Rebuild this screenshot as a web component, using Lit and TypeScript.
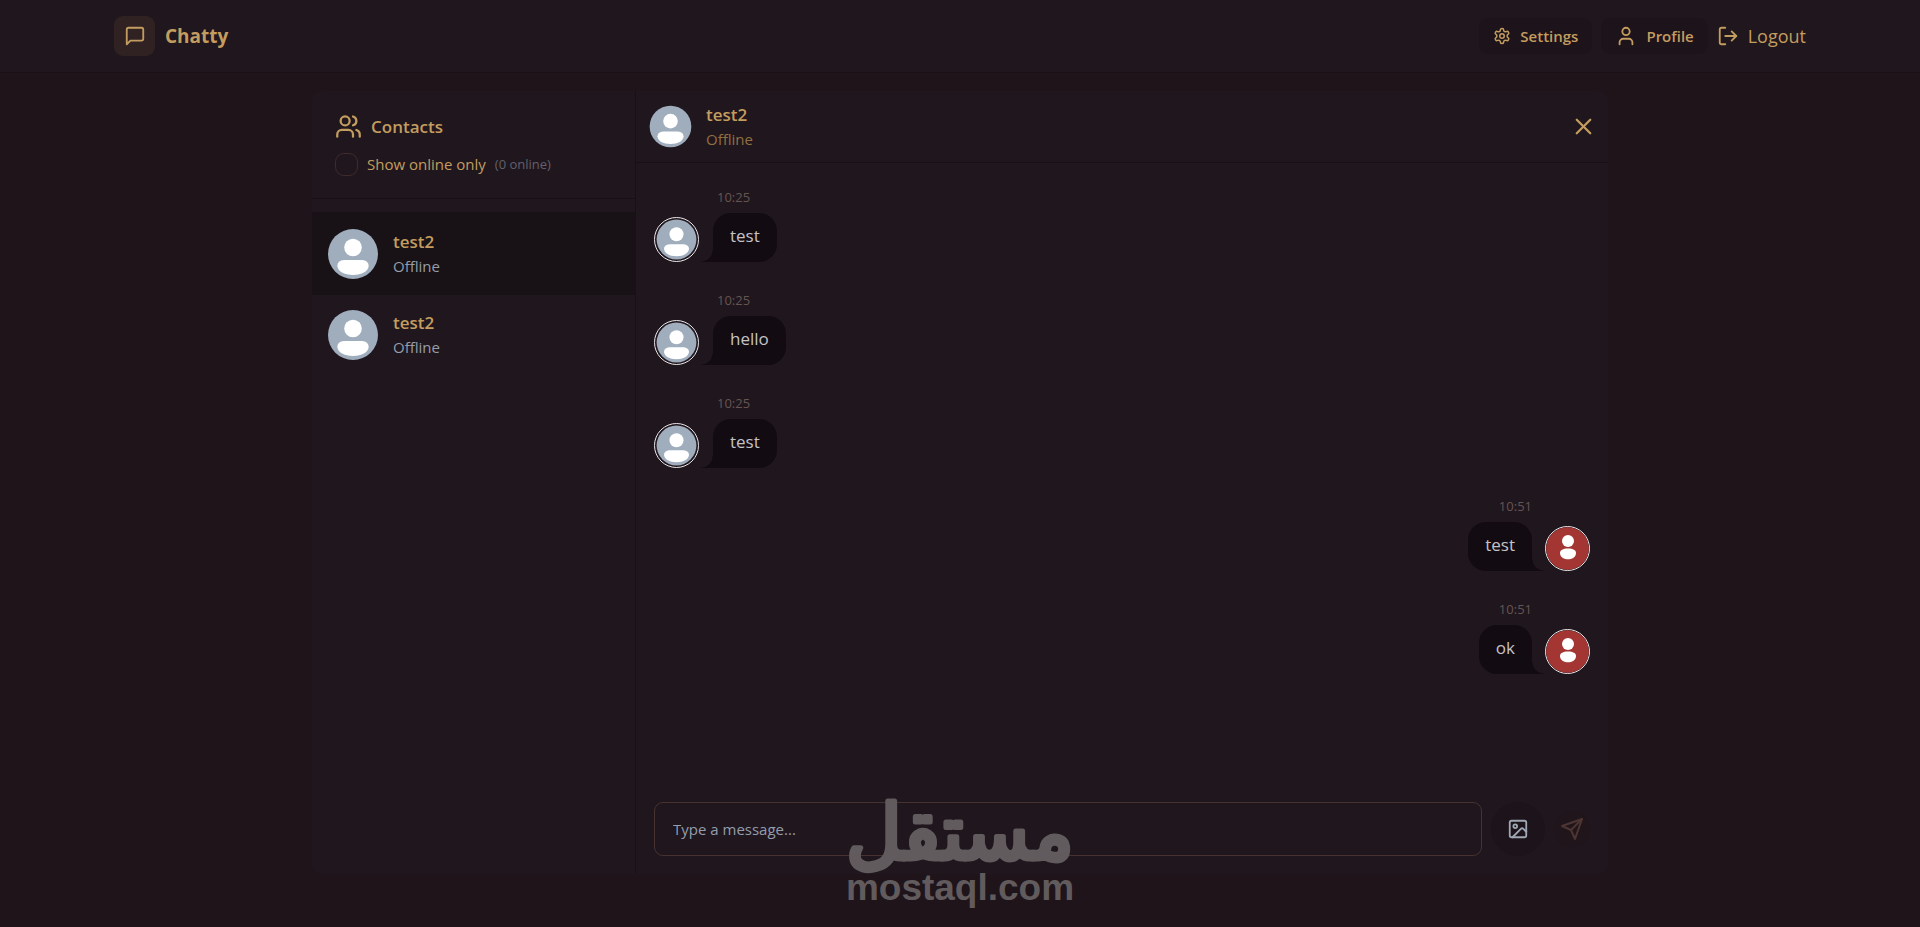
import { LitElement, html, svg, css } from "lit";
import { customElement, state } from "lit/decorators.js";

interface Contact {
  name: string;
  status: string;
}

interface Message {
  text: string;
  time: string;
  mine: boolean;
}

const contacts: Contact[] = [
  { name: "test2", status: "Offline" },
  { name: "test2", status: "Offline" },
];

const messages: Message[] = [
  { text: "test", time: "10:25", mine: false },
  { text: "hello", time: "10:25", mine: false },
  { text: "test", time: "10:25", mine: false },
  { text: "test", time: "10:51", mine: true },
  { text: "ok", time: "10:51", mine: true },
];

const icons = {
  message: svg`<path d="M21 15a2 2 0 0 1-2 2H7l-4 4V5a2 2 0 0 1 2-2h14a2 2 0 0 1 2 2z"/>`,
  settings: svg`<path d="M12.22 2h-.44a2 2 0 0 0-2 2v.18a2 2 0 0 1-1 1.73l-.43.25a2 2 0 0 1-2 0l-.15-.08a2 2 0 0 0-2.73.73l-.22.38a2 2 0 0 0 .73 2.73l.15.1a2 2 0 0 1 1 1.72v.51a2 2 0 0 1-1 1.74l-.15.09a2 2 0 0 0-.73 2.73l.22.38a2 2 0 0 0 2.73.73l.15-.08a2 2 0 0 1 2 0l.43.25a2 2 0 0 1 1 1.73V20a2 2 0 0 0 2 2h.44a2 2 0 0 0 2-2v-.18a2 2 0 0 1 1-1.73l.43-.25a2 2 0 0 1 2 0l.15.08a2 2 0 0 0 2.73-.73l.22-.39a2 2 0 0 0-.73-2.73l-.15-.08a2 2 0 0 1-1-1.74v-.5a2 2 0 0 1 1-1.74l.15-.09a2 2 0 0 0 .73-2.73l-.22-.38a2 2 0 0 0-2.73-.73l-.15.08a2 2 0 0 1-2 0l-.43-.25a2 2 0 0 1-1-1.73V4a2 2 0 0 0-2-2z"/><circle cx="12" cy="12" r="3"/>`,
  user: svg`<path d="M19 21v-2a4 4 0 0 0-4-4H9a4 4 0 0 0-4 4v2"/><circle cx="12" cy="7" r="4"/>`,
  logout: svg`<path d="M9 21H5a2 2 0 0 1-2-2V5a2 2 0 0 1 2-2h4"/><path d="m16 17 5-5-5-5"/><path d="M21 12H9"/>`,
  users: svg`<path d="M16 21v-2a4 4 0 0 0-4-4H6a4 4 0 0 0-4 4v2"/><circle cx="9" cy="7" r="4"/><path d="M22 21v-2a4 4 0 0 0-3-3.87"/><path d="M16 3.13a4 4 0 0 1 0 7.75"/>`,
  close: svg`<path d="M18 6 6 18"/><path d="m6 6 12 12"/>`,
  image: svg`<rect x="3" y="3" width="18" height="18" rx="2"/><circle cx="9" cy="9" r="2"/><path d="m21 15-3.086-3.086a2 2 0 0 0-2.828 0L6 21"/>`,
  send: svg`<path d="m22 2-7 20-4-9-9-4Z"/><path d="M22 2 11 13"/>`,
};

const icon = (name: keyof typeof icons, size: string) => html`
  <svg class="icon ${size}" viewBox="0 0 24 24" aria-hidden="true">${icons[name]}</svg>
`;

const guestAvatar = html`
  <svg class="portrait" viewBox="0 0 54 54" aria-hidden="true">
    <circle cx="27" cy="27" r="25" fill="#9fadbd" />
    <circle cx="27" cy="20.500" r="8.800" fill="#fff" />
    <path d="M18 33H36Q42.500 33.500 42.700 39C42 44.500 36 48 27 48S12 44.500 11.300 39Q11.500 33.500 18 33Z" fill="#fff" />
  </svg>
`;

const ownAvatar = html`
  <svg class="portrait" viewBox="0 0 43 43" aria-hidden="true">
    <circle cx="21.500" cy="21.500" r="21.500" fill="#a33532" />
    <circle cx="22" cy="14" r="6" fill="#fff" />
    <path d="M14 26C14 23 17 21.500 22 21.500S30 23 30 26C30 29.500 27 32.300 22 32.300S14 29.500 14 26Z" fill="#fff" />
  </svg>
`;

@customElement("app-root")
export class AppRoot extends LitElement {
  @state() private selected = 0;
  @state() private draft = "";

  static styles = css`
    :host {
      display: flex;
      flex-direction: column;
      min-height: 100vh;
      box-sizing: border-box;
      background: #1e141a;
      color: #c39d5f;
      font: 17px/27px "Open Sans", "Noto Sans", sans-serif;
    }
    * {
      box-sizing: border-box;
    }
    h1, h2, h3, p, ul, ol {
      margin: 0;
      padding: 0;
      list-style: none;
    }
    button, input {
      font: inherit;
      color: inherit;
      margin: 0;
    }
    button {
      display: flex;
      align-items: center;
      border: 0;
      padding: 0;
      background: none;
      cursor: pointer;
    }
    a {
      color: inherit;
      text-decoration: none;
    }
    .icon {
      display: block;
      flex: none;
      fill: none;
      stroke: currentColor;
      stroke-width: 2;
      stroke-linecap: round;
      stroke-linejoin: round;
    }
    .s18 { width: 18px; height: 18px; }
    .s22 { width: 22px; height: 22px; }
    .s24 { width: 24px; height: 24px; }
    .s27 { width: 27px; height: 27px; }

    .topbar {
      background: #20161d;
      border-bottom: 1px solid #190f16;
    }
    .bar {
      display: flex;
      align-items: center;
      justify-content: space-between;
      max-width: 1728px;
      height: 72px;
      margin: 0 auto;
      padding: 0 18px;
    }
    .brand {
      display: flex;
      align-items: center;
      gap: 10px;
    }
    .mark {
      display: grid;
      place-items: center;
      width: 41px;
      height: 40px;
      border-radius: 9px;
      background: #302123;
    }
    .brand h1 {
      font-size: 19px;
      font-weight: 700;
    }
    .actions {
      display: flex;
      align-items: center;
      gap: 9px;
    }
    .pill {
      display: flex;
      align-items: center;
      gap: 9px;
      height: 36px;
      padding: 0 14px;
      border-radius: 9px;
      background: #1d131a;
      font-size: 15px;
      font-weight: 600;
    }
    .logout {
      gap: 9px;
      font-size: 18px;
    }

    main {
      flex: 1;
      display: flex;
      justify-content: center;
      padding: 18px 18px 53px;
    }
    .panel {
      display: flex;
      width: 100%;
      max-width: 1296px;
      border-radius: 9px;
      overflow: hidden;
      background: #20161e;
    }
    .sidebar {
      flex: none;
      width: 324px;
      border-right: 1px solid #190f16;
    }
    .sidehead {
      padding: 22px 23px;
      border-bottom: 1px solid #190f16;
    }
    .title {
      display: flex;
      align-items: center;
      gap: 9px;
    }
    .title h2 {
      font-size: 17px;
      font-weight: 600;
    }
    .filter {
      display: flex;
      align-items: center;
      gap: 9px;
      margin-top: 13px;
      line-height: 23px;
    }
    .filter label {
      display: flex;
      align-items: center;
      gap: 9px;
      font-size: 15px;
    }
    .check {
      appearance: none;
      width: 23px;
      height: 23px;
      border: 1px solid #3e2b2c;
      border-radius: 9px;
      cursor: pointer;
    }
    .count {
      font-size: 13px;
      color: #62606b;
    }
    .contacts {
      padding: 14px 0;
    }
    .contact {
      gap: 13px;
      width: 100%;
      height: 81px;
      padding: 0 14px;
      text-align: left;
    }
    .active {
      background: #181116;
      box-shadow: 0 0 0 1px #181116;
    }
    .portrait {
      display: block;
      width: 100%;
      height: 100%;
    }
    .large {
      flex: none;
      width: 54px;
      height: 54px;
    }
    .medium {
      flex: none;
      width: 45px;
      height: 45px;
    }
    .name {
      display: block;
      font-size: 17px;
      font-weight: 600;
      line-height: 26px;
    }
    .status {
      display: block;
      font-size: 15px;
      line-height: 23px;
    }
    .contact .status {
      color: #949daa;
    }

    .chat {
      flex: 1;
      min-width: 0;
      display: flex;
      flex-direction: column;
    }
    .chathead {
      display: flex;
      align-items: center;
      gap: 13px;
      padding: 11px 11px 11px 12px;
      border-bottom: 1px solid #190f16;
    }
    .who {
      flex: 1;
    }
    .who .status {
      color: #90703f;
    }
    .log {
      flex: 1;
      display: flex;
      flex-direction: column;
      gap: 18px;
      padding: 18px;
    }
    .message {
      display: grid;
      grid-template-columns: 45px auto;
      justify-content: start;
      column-gap: 14px;
      padding: 5px 0 4px;
    }
    .mine {
      grid-template-columns: auto 45px;
      justify-content: end;
      column-gap: 13px;
    }
    .time {
      grid-column: 2;
      margin: 0 0 4px 4px;
      font-size: 13px;
      line-height: 23px;
      color: #655551;
    }
    .mine .time {
      grid-column: 1;
      justify-self: end;
    }
    .face {
      grid-row: 2;
      grid-column: 1;
      align-self: end;
      border: 1px solid #e9e7e8;
      border-radius: 50%;
      overflow: hidden;
    }
    .mine .face {
      grid-column: 2;
    }
    .bubble {
      position: relative;
      grid-row: 2;
      grid-column: 2;
      padding: 9px 17px 13px;
      border-radius: 18px 18px 18px 0;
      background: #120b11;
      color: #c5c3c6;
    }
    .bubble::before {
      content: "";
      position: absolute;
      bottom: 0;
      right: 100%;
      width: 12px;
      height: 12px;
      background: radial-gradient(circle at 0 0, transparent 11px, #120b11 12px);
    }
    .mine .bubble {
      grid-column: 1;
      justify-self: end;
      border-radius: 18px 18px 0 18px;
    }
    .mine .bubble::before {
      right: auto;
      left: 100%;
      background: radial-gradient(circle at 100% 0, transparent 11px, #120b11 12px);
    }

    .composer {
      display: flex;
      align-items: center;
      gap: 9px;
      padding: 18px;
    }
    .field {
      flex: 1;
      min-width: 0;
      height: 54px;
      padding: 0 18px;
      border: 1px solid #46322f;
      border-radius: 9px;
      background: transparent;
      font-size: 15px;
      outline: none;
    }
    .field::placeholder {
      color: #939dac;
      opacity: 1;
    }
    .attach {
      justify-content: center;
      width: 54px;
      height: 54px;
      border-radius: 50%;
      background: #1d131a;
      color: #9ea7b3;
    }
    .send {
      justify-content: center;
      width: 36px;
      height: 36px;
      border-radius: 50%;
      background: #1f151b;
      color: #4c3532;
    }

    .watermark {
      position: absolute;
      left: 50%;
      bottom: 16px;
      width: 240px;
      height: 112px;
      margin-left: -120px;
      overflow: visible;
      fill: #625b5e;
      stroke: #625b5e;
      stroke-linecap: round;
      stroke-linejoin: round;
      pointer-events: none;
    }
    .arabic {
      font: 400 76px "DejaVu Sans", sans-serif;
      stroke-width: 5;
    }
    .latin {
      font: 700 37px "Liberation Sans", sans-serif;
      stroke-width: 0;
    }
  `;

  render() {
    const current = contacts[this.selected];
    return html`
      <header class="topbar">
        <div class="bar">
          <a class="brand" href="#">
            <span class="mark">${icon("message", "s22")}</span>
            <h1>Chatty</h1>
          </a>
          <nav class="actions">
            <a class="pill" href="#settings">${icon("settings", "s18")}<span>Settings</span></a>
            <a class="pill" href="#profile">${icon("user", "s22")}<span>Profile</span></a>
            <button class="logout" type="button">${icon("logout", "s22")}<span>Logout</span></button>
          </nav>
        </div>
      </header>

      <main>
        <div class="panel">
          <aside class="sidebar">
            <div class="sidehead">
              <div class="title">${icon("users", "s27")}<h2>Contacts</h2></div>
              <div class="filter">
                <label><input class="check" type="checkbox" />Show online only</label>
                <span class="count">(0 online)</span>
              </div>
            </div>
            <ul class="contacts">
              ${contacts.map(
                (c, i) => html`
                  <li>
                    <button
                      class="contact ${i === this.selected ? "active" : ""}"
                      type="button"
                      @click=${() => (this.selected = i)}
                    >
                      <span class="large">${guestAvatar}</span>
                      <span>
                        <span class="name">${c.name}</span>
                        <span class="status">${c.status}</span>
                      </span>
                    </button>
                  </li>
                `
              )}
            </ul>
          </aside>

          <section class="chat">
            <div class="chathead">
              <span class="medium">${guestAvatar}</span>
              <div class="who">
                <h3 class="name">${current.name}</h3>
                <p class="status">${current.status}</p>
              </div>
              <button type="button" aria-label="Close chat">${icon("close", "s27")}</button>
            </div>

            <ol class="log">
              ${messages.map(
                (m) => html`
                  <li class="message ${m.mine ? "mine" : ""}">
                    <time class="time">${m.time}</time>
                    <span class="medium face">${m.mine ? ownAvatar : guestAvatar}</span>
                    <p class="bubble">${m.text}</p>
                  </li>
                `
              )}
            </ol>

            <form class="composer" @submit=${(e: Event) => e.preventDefault()}>
              <input
                class="field"
                type="text"
                aria-label="Message"
                placeholder="Type a message..."
                .value=${this.draft}
                @input=${(e: Event) => (this.draft = (e.target as HTMLInputElement).value)}
              />
              <button class="attach" type="button" aria-label="Attach image">${icon("image", "s22")}</button>
              <button class="send" type="submit" aria-label="Send" ?disabled=${!this.draft}>
                ${icon("send", "s24")}
              </button>
            </form>
          </section>
        </div>
      </main>

      <svg class="watermark" viewBox="0 0 240 112">
        <text class="arabic" x="120" y="60" text-anchor="middle">مستقل</text>
        <text class="latin" x="120" y="101" text-anchor="middle">mostaql.com</text>
      </svg>
    `;
  }
}
